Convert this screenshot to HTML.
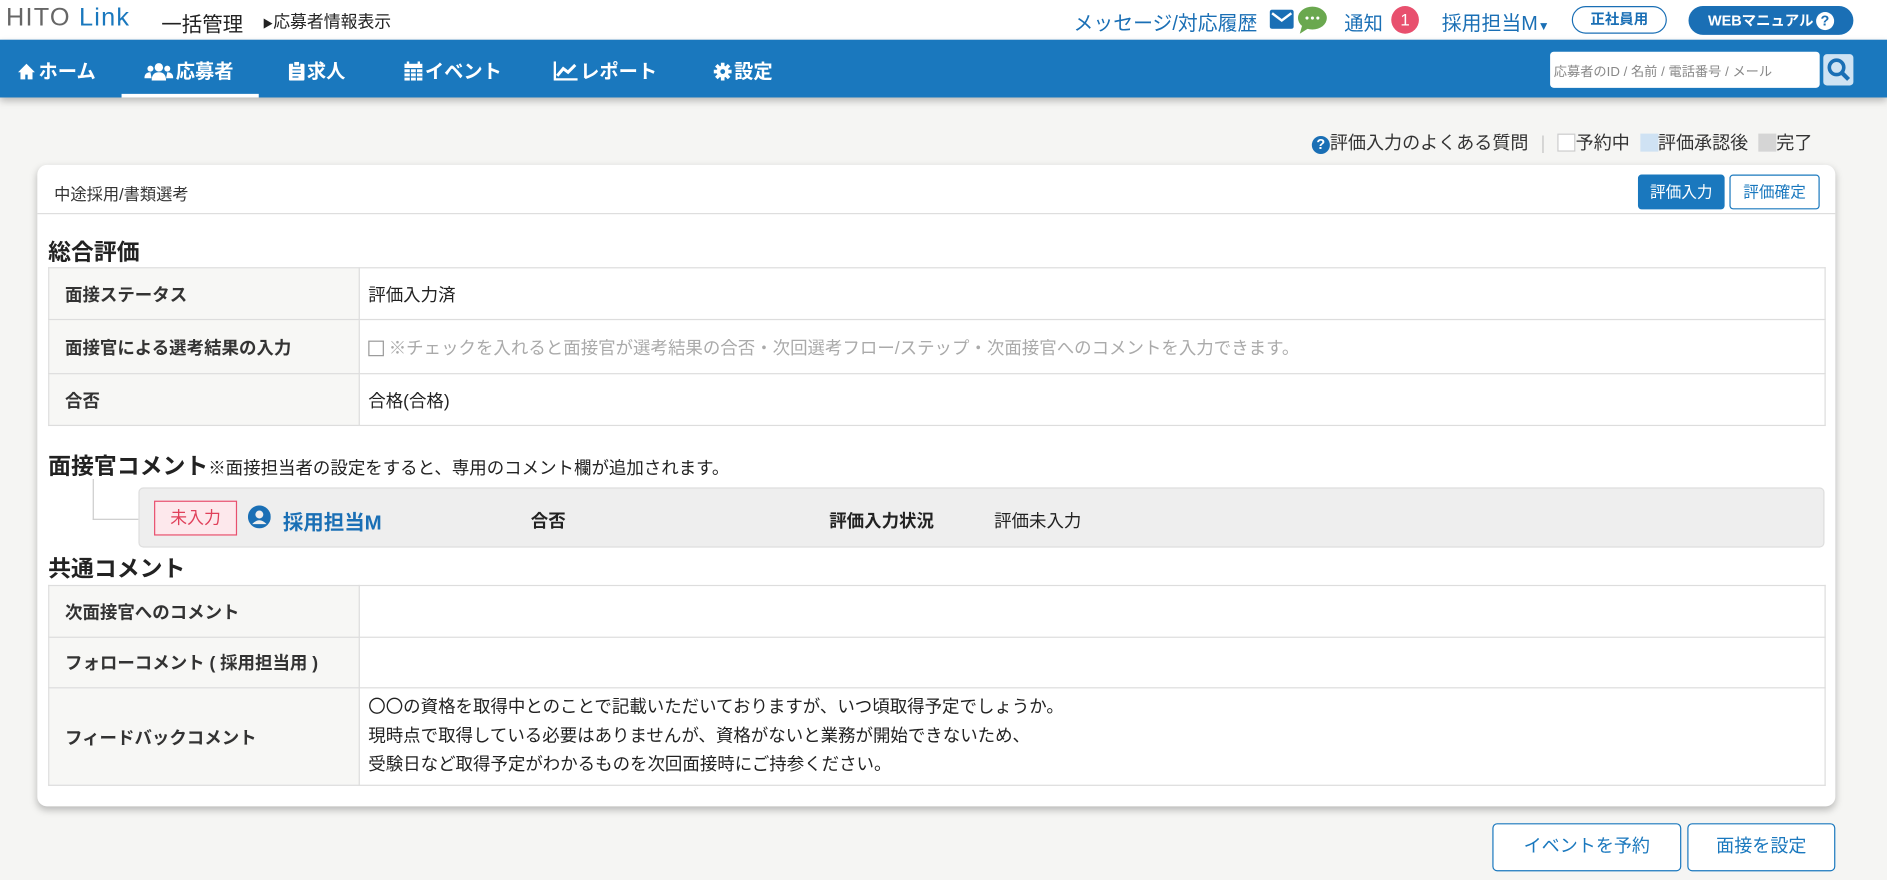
<!DOCTYPE html>
<html><head><meta charset="utf-8"><style>
*{box-sizing:border-box;margin:0;padding:0}
html,body{width:1887px;height:879px;overflow:hidden;background:#f5f5f3}
body{font-family:"Liberation Sans","Noto Sans CJK JP",sans-serif;color:#222}
#w{position:absolute;left:0;top:0;width:1568px;height:731px;transform:scale(1.2035);transform-origin:0 0;background:#f5f5f3}
.a{position:absolute;white-space:nowrap}
.hdr{position:absolute;left:0;top:0;width:1568px;height:33px;background:#fff}
.nav{position:absolute;left:0;top:33px;width:1568px;height:48px;background:#1a78be;box-shadow:0 3px 6px rgba(0,0,0,.25)}
.nav .i{position:absolute;top:13px;color:#fff;font-weight:bold;font-size:16px}
.nav svg{vertical-align:-2px;margin-right:2px}
.blue{color:#1a6fb5}
.card{position:absolute;left:31px;top:137px;width:1494px;height:533px;background:#fff;border-radius:8px;box-shadow:0 3px 6px rgba(0,0,0,.25)}
table{position:absolute;border-collapse:collapse;font-size:14.5px}
td{border-top:1px solid #ddd;border-bottom:1px solid #ddd;padding:0 13px}
td.l{background:#f7f7f5;width:258px;font-weight:bold;border-left:1px solid #ddd;border-right:1px solid #ddd;color:#333}
td.r{padding-left:7px;border-right:1px solid #ddd}
.btn{position:absolute;border:1px solid #1a78be;border-radius:3px;color:#1a78be;font-size:13px;text-align:center;background:#fff}
</style></head><body><div id="w">
<div class="hdr">
<div class="a" style="left:5px;top:3px;font-size:21px;letter-spacing:1px"><span style="color:#666">HITO</span> <span style="color:#1a78be">Link</span></div>
<div class="a" style="left:134px;top:6px;font-size:17px;color:#222">一括管理</div>
<div class="a" style="left:218px;top:8px;font-size:14px;color:#222"><span style="font-size:9px">▶</span>応募者情報表示</div>
<div class="a blue" style="left:892px;top:6px;font-size:16.5px">メッセージ/対応履歴</div>
<svg class="a" style="left:1055px;top:8px" width="20" height="16"><rect width="20" height="16" rx="2" fill="#1a6fb5"/><path d="M2 3 L10 9 L18 3" stroke="#fff" stroke-width="2" fill="none"/></svg>
<svg class="a" style="left:1078px;top:5px" width="25" height="23"><ellipse cx="12.5" cy="10" rx="12" ry="9.5" fill="#6aa84f"/><path d="M4 16 L2 23 L10 18Z" fill="#6aa84f"/><circle cx="8" cy="10" r="1.3" fill="#fff"/><circle cx="12.5" cy="10" r="1.3" fill="#fff"/><circle cx="17" cy="10" r="1.3" fill="#fff"/></svg>
<div class="a blue" style="left:1117px;top:6px;font-size:16px">通知</div>
<div class="a" style="left:1156px;top:5px;width:23px;height:23px;border-radius:50%;background:#e8506e;color:#fff;font-size:14px;text-align:center;line-height:23px">1</div>
<div class="a blue" style="left:1198px;top:6px;font-size:16.5px">採用担当M<span style="font-size:10px">▼</span></div>
<div class="a" style="left:1306px;top:5px;width:79px;height:23px;border:1px solid #1a6fb5;border-radius:12px;color:#1a6fb5;font-size:12px;font-weight:bold;text-align:center;line-height:21px">正社員用</div>
<div class="a" style="left:1403px;top:5px;width:137px;height:24px;background:#1a6fb5;border-radius:12px;color:#fff;font-size:12px;font-weight:bold;text-align:center;line-height:24px">WEBマニュアル<span style="display:inline-block;width:15px;height:15px;border-radius:50%;background:#fff;color:#1a6fb5;line-height:15px;margin-left:2px">?</span></div>
</div>
<div class="nav">
<div class="i" style="left:14px"><svg width="16" height="15"><path d="M8 1 L1 8 L3 8 L3 14 L7 14 L7 10 L9 10 L9 14 L13 14 L13 8 L15 8Z" fill="#fff"/></svg>ホーム</div>
<div class="i" style="left:120px"><svg width="24" height="15"><circle cx="12" cy="4" r="3.5" fill="#fff"/><path d="M6 15 Q6 8 12 8 Q18 8 18 15Z" fill="#fff"/><circle cx="5" cy="5" r="2.5" fill="#fff"/><circle cx="19" cy="5" r="2.5" fill="#fff"/><path d="M0 13 Q0 8 5 8 L6 13Z M24 13 Q24 8 19 8 L18 13Z" fill="#fff"/></svg>応募者</div>
<div class="a" style="left:101px;top:45px;width:114px;height:3px;background:#fff"></div>
<div class="i" style="left:240px"><svg width="13" height="16"><rect x="0" y="2" width="13" height="14" rx="1" fill="#fff"/><rect x="4" y="0" width="5" height="4" fill="#fff" stroke="#1a78be"/><path d="M3 7h7M3 10h7M3 13h5" stroke="#1a78be"/></svg>求人</div>
<div class="i" style="left:336px"><svg width="15" height="16"><rect x="0" y="2" width="15" height="14" fill="#fff"/><path d="M0 6h15M0 9.5h15M0 13h15M5 6v10M10 6v10" stroke="#1a78be"/><path d="M3 0v3M12 0v3" stroke="#fff" stroke-width="2"/></svg>イベント</div>
<div class="i" style="left:460px"><svg width="20" height="16"><path d="M1 0v15h19" stroke="#fff" stroke-width="2" fill="none"/><path d="M3 12 L8 6 L12 9 L18 3" stroke="#fff" stroke-width="2.5" fill="none"/></svg>レポート</div>
<div class="i" style="left:593px"><svg width="15" height="15"><circle cx="7.5" cy="7.5" r="5" fill="#fff"/><path d="M7.5 0v15M0 7.5h15M2.2 2.2l10.6 10.6M12.8 2.2L2.2 12.8" stroke="#fff" stroke-width="3"/><circle cx="7.5" cy="7.5" r="2" fill="#1a78be"/></svg>設定</div>
<div class="a" style="left:1288px;top:10px;width:224px;height:30px;background:#fff;border-radius:3px;font-size:11px;color:#888;padding:8px 3px">応募者のID / 名前 / 電話番号 / メール</div>
<div class="a" style="left:1515px;top:12px;width:25px;height:26px;background:#cfe3f3;border-radius:3px"><svg width="25" height="26"><circle cx="11" cy="11" r="6" stroke="#1a6fb5" stroke-width="3" fill="none"/><path d="M15 15 L21 21" stroke="#1a6fb5" stroke-width="3.5"/></svg></div>
</div>
<div class="a" style="left:1090px;top:108px;font-size:15px;color:#333"><span style="display:inline-block;width:15px;height:15px;border-radius:50%;background:#1a6fb5;color:#fff;font-size:12px;text-align:center;line-height:15px;font-weight:bold">?</span>評価入力のよくある質問 <span style="color:#ccc;margin:0 6px">|</span> <span style="display:inline-block;width:15px;height:15px;border:1px solid #ccc;background:#fff;vertical-align:-2px"></span>予約中 &nbsp;<span style="display:inline-block;width:15px;height:15px;background:#cfe2f3;vertical-align:-2px"></span>評価承認後 &nbsp;<span style="display:inline-block;width:15px;height:15px;background:#d5d5d5;vertical-align:-2px"></span>完了</div>
<div class="card">
<div class="a" style="left:14px;top:13px;font-size:13.5px;color:#333">中途採用/書類選考</div>
<div class="btn" style="left:1330px;top:8px;width:72px;height:29px;line-height:27px;background:#1a78be;color:#fff">評価入力</div>
<div class="btn" style="left:1406px;top:8px;width:75px;height:29px;line-height:27px">評価確定</div>
<div class="a" style="left:0;top:40px;width:1494px;height:1px;background:#ddd"></div>
<div class="a" style="left:9px;top:58px;font-size:19px;font-weight:bold">総合評価</div>
</div>
<table style="left:40px;top:222px;width:1477px">
<tr style="height:43px"><td class="l">面接ステータス</td><td class="r">評価入力済</td></tr>
<tr style="height:45px"><td class="l">面接官による選考結果の入力</td><td class="r" style="color:#aaa"><span style="display:inline-block;width:13px;height:13px;border:1px solid #999;vertical-align:-2px;margin-right:4px"></span>※チェックを入れると面接官が選考結果の合否・次回選考フロー/ステップ・次面接官へのコメントを入力できます。</td></tr>
<tr style="height:43px"><td class="l">合否</td><td class="r">合格(合格)</td></tr>
</table>
<div class="a" style="left:40px;top:373px;font-size:19px;font-weight:bold">面接官コメント<span style="font-size:14.5px;font-weight:normal">※面接担当者の設定をすると、専用のコメント欄が追加されます。</span></div>
<div class="a" style="left:77px;top:398px;width:38px;height:34px;border-left:1px solid #ccc;border-bottom:1px solid #ccc"></div>
<div class="a" style="left:115px;top:405px;width:1401px;height:50px;background:#eee;border:1px solid #ddd;border-radius:4px"></div>
<div class="a" style="left:128px;top:416px;width:69px;height:29px;background:#fde8ec;border:1px solid #e8506e;color:#e0405a;font-size:14px;text-align:center;line-height:27px">未入力</div>
<svg class="a" style="left:206px;top:420px" width="19" height="19"><circle cx="9.5" cy="9.5" r="9.5" fill="#1a6fb5"/><circle cx="9.5" cy="7.5" r="3.3" fill="#eee"/><path d="M3.5 15.5 Q9.5 9 15.5 15.5" fill="#eee"/></svg>
<div class="a blue" style="left:235px;top:420px;font-size:17px;font-weight:bold">採用担当M</div>
<div class="a" style="left:441px;top:422px;font-size:14.5px;font-weight:bold">合否</div>
<div class="a" style="left:689px;top:422px;font-size:14.5px;font-weight:bold">評価入力状況</div>
<div class="a" style="left:826px;top:422px;font-size:14.5px">評価未入力</div>
<div class="a" style="left:40px;top:458px;font-size:19px;font-weight:bold">共通コメント</div>
<table style="left:40px;top:486px;width:1477px">
<tr style="height:43px"><td class="l">次面接官へのコメント</td><td class="r"></td></tr>
<tr style="height:42px"><td class="l">フォローコメント ( 採用担当用 )</td><td class="r"></td></tr>
<tr style="height:81px"><td class="l">フィードバックコメント</td><td class="r" style="line-height:24px">〇〇の資格を取得中とのことで記載いただいておりますが、いつ頃取得予定でしょうか。<br>現時点で取得している必要はありませんが、資格がないと業務が開始できないため、<br>受験日など取得予定がわかるものを次回面接時にご持参ください。</td></tr>
</table>
<div class="btn" style="left:1240px;top:684px;width:157px;height:40px;line-height:38px;font-size:15px;border-radius:4px">イベントを予約</div>
<div class="btn" style="left:1402px;top:684px;width:123px;height:40px;line-height:38px;font-size:15px;border-radius:4px">面接を設定</div>
</div></body></html>
